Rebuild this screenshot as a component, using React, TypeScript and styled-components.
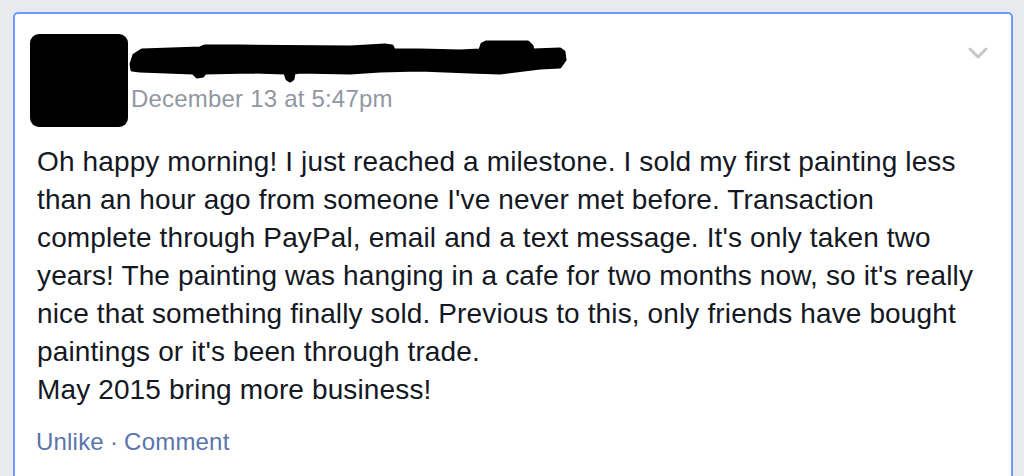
import React from "react";
import styled, { createGlobalStyle } from "styled-components";

const Global = createGlobalStyle`
  html, body {
    margin: 0;
    padding: 0;
    background: #e9eaed;
    overflow: hidden;
  }
  body {
    font-family: "Liberation Sans", Arial, Helvetica, sans-serif;
  }
`;

const Page = styled.div`
  width: 1024px;
  height: 476px;
  padding: 12px 0 0 13px;
  box-sizing: border-box;
  overflow: hidden;
`;

const Card = styled.div`
  box-sizing: border-box;
  width: 1000px;
  height: 480px;
  background: #ffffff;
  border: 2px solid #6a9bff;
  border-radius: 5px;
  padding: 20px 15px 0 15px;
`;

const Header = styled.div`
  display: flex;
  align-items: flex-start;
`;

const Avatar = styled.div`
  width: 98px;
  height: 93px;
  border-radius: 9px;
  background: #000;
  flex-shrink: 0;
`;

const Info = styled.div`
  display: flex;
  flex-direction: column;
`;

const Scribble = styled.svg`
  display: block;
  margin-top: 6px;
  width: 440px;
  height: 44px;
`;

const DateText = styled.div`
  margin: 1px 0 0 3px;
  font-size: 24px;
  letter-spacing: 0.2px;
  line-height: 28px;
  color: #9197a3;
  white-space: nowrap;
`;

const MenuButton = styled.div`
  margin-left: auto;
  margin-top: 13px;
  margin-right: 8px;
  width: 20px;
  height: 12px;
  display: flex;
`;

const Body = styled.div`
  margin: 16px 0 0 7px;
  font-size: 28px;
  letter-spacing: 0.13px;
  line-height: 38px;
  color: #141823;
`;

const Line = styled.div`
  white-space: nowrap;
`;

const Actions = styled.div`
  margin: 19px 0 0 6px;
  font-size: 24px;
  letter-spacing: 0.2px;
  line-height: 28px;
  color: #5b74ab;
  white-space: nowrap;
`;

const ActionLink = styled.span`
  cursor: pointer;
`;

const Sep = styled.span`
  margin: 0 0.25em;
`;

const lines = [
  "Oh happy morning! I just reached a milestone. I sold my first painting less",
  "than an hour ago from someone I've never met before. Transaction",
  "complete through PayPal, email and a text message. It's only taken two",
  "years! The painting was hanging in a cafe for two months now, so it's really",
  "nice that something finally sold. Previous to this, only friends have bought",
  "paintings or it's been through trade.",
  "May 2015 bring more business!",
];

const scribblePoints =
  "3,24 6,15 14,10 72,8 77,6 112,6 222,7 257,5 264,6 266,10 292,10 332,11 352,10 354,4 358,2 400,2 404,6 405,10 432,9 436,12 437,20 432,27 412,28 372,33 342,32 292,30 252,31 222,33 172,32 166,33 165,39 162,41 159,39 157,33 122,32 77,33 75,36 69,37 65,33 12,31 4,30";

export default function App() {
  return (
    <>
      <Global />
      <Page>
        <Card>
          <Header>
            <Avatar />
            <Info>
              <Scribble viewBox="0 0 440 44">
                <polygon
                  points={scribblePoints}
                  fill="#000"
                  stroke="#000"
                  strokeWidth={3}
                  strokeLinejoin="round"
                />
              </Scribble>
              <DateText>December 13 at 5:47pm</DateText>
            </Info>
            <MenuButton>
              <svg width="20" height="12" viewBox="0 0 20 12">
                <polyline
                  points="2,2 10,10 18,2"
                  fill="none"
                  stroke="#c4c6ca"
                  strokeWidth={3}
                  strokeLinecap="round"
                  strokeLinejoin="round"
                />
              </svg>
            </MenuButton>
          </Header>
          <Body>
            {lines.map((l) => (
              <Line key={l}>{l}</Line>
            ))}
          </Body>
          <Actions>
            <ActionLink>Unlike</ActionLink>
            <Sep>·</Sep>
            <ActionLink>Comment</ActionLink>
          </Actions>
        </Card>
      </Page>
    </>
  );
}
